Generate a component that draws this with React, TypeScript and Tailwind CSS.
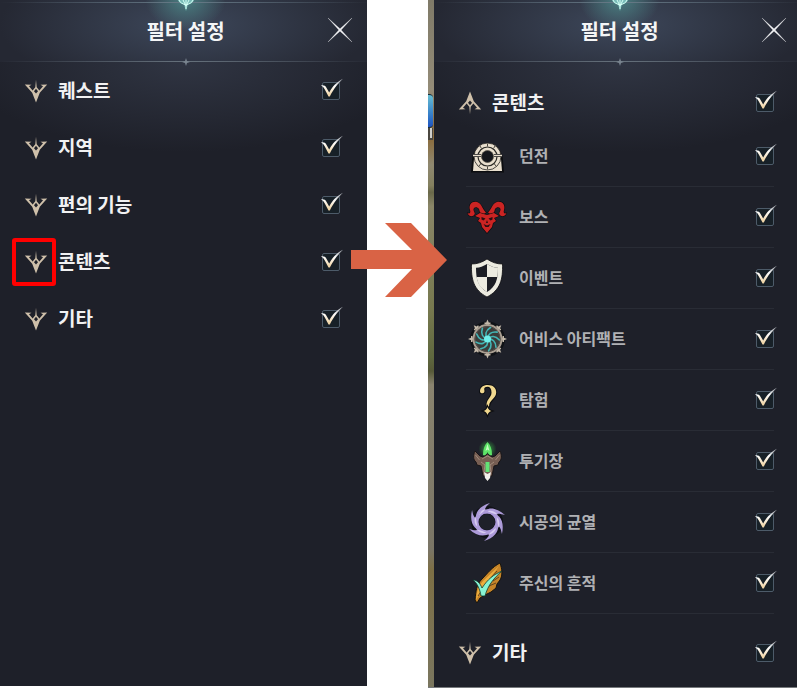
import { useState } from "react";
import type { ReactNode } from "react";

const CATEGORIES = ["퀘스트", "지역", "편의 기능", "콘텐츠", "기타"];

const DungeonIcon = () => (
  <svg viewBox="0 0 42 42" className="size-[42px]" aria-hidden="true">
    <path d="M5 37.5l1-12a15.300 15.300 0 0 1 31 0l1 12z" fill="#0c0d10" />
    <path d="M7 36l1-12h27l1 12z" fill="#e9dfce" />
    <circle cx="21.500" cy="21.500" r="13.500" fill="#e9dfce" stroke="#23221f" strokeWidth="0.800" />
    <circle cx="21.500" cy="21.500" r="9.500" fill="none" stroke="#2a2925" strokeWidth="1.200" />
    <circle cx="21.500" cy="21.500" r="6" fill="#14161c" stroke="#5b554b" strokeWidth="0.800" />
    <path d="M21.500 8.500v3M21.500 31.500v3M14 11l1.500 2.500M29 11l-1.500 2.500M13 31l2-2.500M30 31l-2-2.500" stroke="#4a463e" />
    <path d="M7 20.500h8M28 20.500h8" stroke="#16171b" strokeWidth="3" />
    <path d="M7 20.500h8M28 20.500h8" stroke="#e9dfce" strokeWidth="1.400" />
  </svg>
);

const BossIcon = () => (
  <svg viewBox="0 0 42 42" className="size-[42px]" aria-hidden="true">
    <g fill="#cb2423" stroke="#0c0d10" strokeWidth="1.200" strokeLinejoin="round" paintOrder="stroke">
      <path d="M15 20l-2-7c-2-3-6-2-5.500 1 .3 2 2 3 1 4.500C7 21 3 21 1.500 17c2 1 3.500 0 2.500-3C2 8 7 4.500 11 6c5 1.500 5 7 9 10.500z" />
      <path d="M27 20l2-7c2-3 6-2 5.500 1-.3 2-2 3-1 4.500 1.500 2.500 5.500 2.500 7-1.500-2 1-3.500 0-2.500-3 2-6-3-9.500-7-8-5 1.500-5 7-9 10.500z" />
      <path d="M14 17l7 2 7-2 5 3-5 2 2 3-3 2-1 4-5 6-5-6-1-4-3-2 2-3-5-2z" />
    </g>
    <path d="M15.500 21l4 1.500-2 2-2-1zM26.500 21l-4 1.500 2 2 2-1zM21 24l-1 3h2zM17.500 28l3.500 1.500 3.500-1.500-2 3h-3z" fill="#2a0d11" />
  </svg>
);

const EventIcon = () => (
  <svg viewBox="0 0 42 42" className="size-[42px]" aria-hidden="true">
    <path d="M21 2c5 3.500 10 5 15.500 5 .5 15-2 26-15.500 33C7.500 33 5 22 5.500 7 11 7 16 5.500 21 2z" fill="#ecebe0" stroke="#0c0d10" strokeWidth="0.800" />
    <path d="M21 7c4 2.500 7 3.500 11 3.700 0 11.500-2 18.800-11 24.300C12 29.500 10 22.200 10 10.700 14 10.500 17 9.500 21 7z" fill="#1b1d24" />
    <path d="M21 7c4 2.500 7 3.500 11 3.700 0 3.300-.2 6.300-.6 9.300H21zM21 20H10.600c.9 6.500 4 11.500 10.400 15z" fill="#ecebe0" />
  </svg>
);

const ArtifactIcon = () => (
  <svg viewBox="0 0 42 42" className="size-[42px]" aria-hidden="true">
    <circle cx="21.500" cy="21" r="17.500" fill="#101216" />
    {[0, 45, 90, 135, 180, 225, 270, 315].map((deg) => (
      <path
        key={deg}
        d="M21.500 1.500l1.300 3h1.700v1.500h-1.500V9h-3V6h-1.500V4.500h1.700z"
        fill="#c4b9aa"
        transform={`rotate(${deg} 21.500 21)`}
      />
    ))}
    <circle cx="21.500" cy="21" r="14" fill="#3b3c3a" stroke="#aa9f92" strokeWidth="2" />
    <circle cx="21.500" cy="21" r="12.500" fill="none" stroke="#584f49" />
    {[0, 40, 80, 120, 160, 200, 240, 280, 320].map((deg) => (
      <path
        key={deg}
        d="M21.500 21c-3-4-2-8.500 3-11.500"
        fill="none"
        stroke="#43b5b5"
        strokeWidth="1.600"
        strokeLinecap="round"
        transform={`rotate(${deg} 21.500 21)`}
      />
    ))}
    <circle cx="21.500" cy="21" r="3.500" fill="#70efea" />
  </svg>
);

const ExploreIcon = () => (
  <svg viewBox="0 0 42 42" className="size-[42px]" aria-hidden="true">
    <g fill="#f1d88f" stroke="#0c0d10" strokeWidth="2" paintOrder="stroke">
      <path d="M14 12.500C14 8.500 17 6 21.800 6c5 0 8.400 2.800 8.400 7.300 0 6.700-7 7.200-7.200 14.200h-2.200c-1.400-7 4.700-8.500 4.700-14 0-3.800-1.500-5.700-4-5.700-2.300 0-3.700 1.200-3.200 3 .6 2-.2 3.500-1.800 3.500-1.500 0-2.500-.7-2.500-1.800z" />
      <path d="M21.500 28c.8 2.300 1.800 3.300 4 4-2.200.7-3.200 1.700-4 4-.8-2.300-1.800-3.300-4-4 2.200-.7 3.200-1.700 4-4z" />
    </g>
  </svg>
);

const ArenaIcon = () => (
  <svg viewBox="0 0 42 42" className="size-[42px]" aria-hidden="true">
    <defs>
      <radialGradient id="arena-glow">
        <stop stopColor="#42ed51" stopOpacity="0.600" />
        <stop offset="1" stopColor="#42ed51" stopOpacity="0" />
      </radialGradient>
    </defs>
    <circle cx="21.500" cy="9" r="9" fill="url(#arena-glow)" />
    <path d="M21.500 2c3 3 4.500 7 4.500 13l-2.500 1-2-4-2 4-2.500-1c0-6 1.500-10 4.500-13z" fill="#5ee568" />
    <path d="M21.500 4l2 7-2-1.500-2 1.500z" fill="#c8ffc2" />
    <path d="M17 17l4.500-3 4.500 3 3-1 5-5c2 4 2 9-1 11l-1 3-4 1-2 10h-9l-2-10-4-1-1-3c-3-2-3-7-1-11l5 5z" fill="#765e53" stroke="#181517" />
    <path d="M16 19l5.500-3 5.500 3M15 22l4 3-1 7M28 22l-4 3 1 7M9.500 15l4 5M33.500 15l-4 5" fill="none" stroke="#a18b7b" />
    <path d="M19.500 22h4v10h-4z" fill="#62e276" />
    <path d="M18 32l3.500 2 3.500-2-1 6-2.500 3-2.500-3z" fill="#f3f0eb" />
  </svg>
);

const RiftIcon = () => (
  <svg viewBox="0 0 42 42" className="size-[42px]" aria-hidden="true">
    <circle cx="21" cy="21" r="12" fill="none" stroke="#101118" strokeWidth="8" />
    <circle cx="21" cy="21" r="10.500" fill="none" stroke="#a995d9" strokeWidth="4" />
    {[0, 60, 120, 180, 240, 300].map((deg) => (
      <g key={deg} transform={`rotate(${deg} 21 21)`}>
        <path d="M10 18C9 11 14 5 24 2c-4 3.500-5.500 5.500-5 8 3-1 6-.5 9 1-7-1-13 1-15 7z" fill="#ad9bd9" />
        <path d="M12 15c1-4 4-6 8-7-3 3-4 4-8 7z" fill="#d7cbf1" />
      </g>
    ))}
  </svg>
);

const TraceIcon = () => (
  <svg viewBox="0 0 42 42" className="size-[42px]" aria-hidden="true">
    <path d="M34 1c2 6 3 12 0 17l-3 4-1 4-5 4-6 3-5 3-3 5-2-3c1-9 1-15 7-21 5-5 10-12 18-16z" fill="#c68428" stroke="#15130f" />
    <path d="M33 4c-7 10-15 20-23 34 1-9 2-14 8-20z" fill="#edad3d" />
    <path d="M31 9C23 18 17 26 12 34M33 15l-6 4M30 21l-7 3" fill="none" stroke="#62441f" />
    <path d="M7 18c4 0 7 3 9 8 6-9 11-13 20-17-8 7-14 14-17 25h-4c-1-7-4-13-8-16z" fill="#87f3d3" stroke="#12392f" strokeWidth="0.800" />
  </svg>
);

const CONTENTS: { name: string; icon: ReactNode }[] = [
  { name: "던전", icon: <DungeonIcon /> },
  { name: "보스", icon: <BossIcon /> },
  { name: "이벤트", icon: <EventIcon /> },
  { name: "어비스 아티팩트", icon: <ArtifactIcon /> },
  { name: "탐험", icon: <ExploreIcon /> },
  { name: "투기장", icon: <ArenaIcon /> },
  { name: "시공의 균열", icon: <RiftIcon /> },
  { name: "주신의 흔적", icon: <TraceIcon /> },
];

const FilterCheckbox = ({ id }: { id: string }) => {
  const [checked, setChecked] = useState(true);

  return (
    <span className="relative size-[18px] shrink-0">
      <input
        id={id}
        type="checkbox"
        checked={checked}
        onChange={(e) => setChecked(e.target.checked)}
        className="peer block size-[18px] cursor-pointer appearance-none rounded-[2px] border border-[#4d5b69] bg-[#172027]"
      />
      <svg
        viewBox="0 0 24 24"
        className="pointer-events-none absolute -top-1 -left-0.5 hidden size-6 peer-checked:block"
        aria-hidden="true"
      >
        <defs>
          <linearGradient id={`${id}-tick`} x1="0" y1="0" x2="0" y2="1">
            <stop offset="0.100" stopColor="#a9adb3" />
            <stop offset="0.400" stopColor="#ffffff" />
            <stop offset="0.900" stopColor="#f0d6a8" />
          </linearGradient>
        </defs>
        <path
          d="M1 7.500c2.300-.6 4.500.2 5.300 2l2.900 5C12.500 8.500 16.500 4 23 .8 18 5.500 14 10.500 9.800 18.500H8.500L4.800 11.500C3.800 9.500 2.800 8.300 1 7.500z"
          fill={`url(#${id}-tick)`}
        />
      </svg>
    </span>
  );
};

const ExpandIcon = ({ expanded }: { expanded: boolean }) => (
  <svg viewBox="0 0 24 24" className={expanded ? "size-6 rotate-180" : "size-6"} aria-hidden="true">
    <g fill="#cfc0aa">
      <path d="M.8 5.500l6.700.3L5 7.300l7 8.200 7-8.200-2.500-1.500 6.700-.3-7.400 8.300L12 23.500l-3.800-9.700z" />
      <path d="M12 .8l.7 7.400 3.300 4-1.500 2L12 16.500l-2.500-2.300-1.500-2 3.300-4z" />
    </g>
    <path d="M12 9.800l2 2.400-2 2.400-2-2.400z" fill="#1e2029" />
  </svg>
);

interface CategoryRowProps {
  id: string;
  name: string;
  expanded?: boolean;
  highlighted?: boolean;
  className: string;
}

const CategoryRow = ({ id, name, expanded = false, highlighted = false, className }: CategoryRowProps) => (
  <div className={`flex items-center pr-[31px] pl-6 ${className}`}>
    <button type="button" aria-label={name} aria-expanded={expanded} className="relative size-6 shrink-0 cursor-pointer">
      <ExpandIcon expanded={expanded} />
      {highlighted && <span className="absolute -inset-y-3 -right-2 -left-3 rounded-[3px] border-4 border-[#ff0000]" />}
    </button>
    <label htmlFor={id} className="ml-2.5 flex-1 pb-0.5 text-[19px] leading-7 font-bold text-[#f1f1f2]">
      {name}
    </label>
    <FilterCheckbox id={id} />
  </div>
);

const PanelHeader = () => (
  <header className="relative flex h-[62px] items-center justify-center bg-[radial-gradient(ellipse_50%_110%_at_50%_40%,#3d475a,#252833)]">
    <div className="absolute inset-x-0 top-0 h-9 bg-[radial-gradient(ellipse_40px_30px_at_50%_0,#4b8083,#4b808300)]" />
    <div className="absolute inset-x-0 top-[2px] h-px bg-linear-to-r from-transparent via-[#667885] to-transparent" />
    <div className="absolute inset-x-0 bottom-0 h-px bg-linear-to-r from-transparent via-[#66717c] to-transparent" />
    <svg viewBox="0 0 24 12" className="absolute top-0 left-1/2 h-3 w-6 -translate-x-1/2" aria-hidden="true">
      <path d="M4 0c1 3 4 4 6 4.500L12 11l2-6.500c2-.5 5-1.500 6-4.500z" fill="#78bcb8" />
      <path d="M5 0c1 3 4 4 7 5 3-1 6-2 7-5M9 0l3 6 3-6M12 0v9" fill="none" stroke="#d5fff5" />
    </svg>
    <svg viewBox="0 0 8 8" className="absolute -bottom-1 left-1/2 size-2 -translate-x-1/2" aria-hidden="true">
      <path d="M4 0l1 3 3 1-3 1-1 3-1-3-3-1 3-1z" fill="#79848f" />
    </svg>
    <h2 className="relative text-[20px] leading-7 font-bold text-[#f4f5f6]">필터 설정</h2>
    <button type="button" aria-label="닫기" className="absolute top-[17px] right-[18px] size-[26px] cursor-pointer">
      <svg viewBox="0 0 26 26" className="size-[26px]" aria-hidden="true">
        <path
          d="M1 1l12 10.800L25 1 14.200 13 25 25 13 14.200 1 25l10.800-12z"
          fill="#f0f1f3"
          stroke="#dfe1e5"
          strokeWidth="0.300"
        />
      </svg>
    </button>
  </header>
);

const panelBody = "bg-[#1e2029] bg-[radial-gradient(ellipse_60%_90px_at_50%_0,#303543,#1e2029)]";

export default function App() {
  return (
    <main className="grid min-h-screen grid-cols-[367fr_369fr] items-start gap-x-[61px] bg-white pr-[3px] font-['Noto_Sans_CJK_KR',sans-serif]">
      <section className="flex min-h-[calc(100vh-4px)] overflow-hidden bg-[#1e2029]">
        <div className="-mr-1 flex min-w-0 flex-1 flex-col">
          <PanelHeader />
          <div className={`flex-1 ${panelBody}`}>
            {CATEGORIES.map((name, i) => (
              <CategoryRow key={name} id={`category-${i}`} name={name} highlighted={name === "콘텐츠"} className="h-[57px]" />
            ))}
          </div>
        </div>
      </section>

      <section className="relative flex min-h-[calc(100vh-2px)] border-b border-[#777a7d] bg-[linear-gradient(#7f7a68,#948c78_13%,#8a6a3a_20%,#8f8870_24%,#84805f_27%,#6a694a_28%,#8a8668_30%,#77794f_45%,#5f683f_52%,#575a38_54%,#8a846f_56%,#7a7566_80%,#7d6f45_83%,#7a765f)] pl-1.5">
        {/* 지도 위 파란 표식 */}
        <div className="absolute top-[94px] left-0 h-[46px] w-[5px] overflow-hidden" aria-hidden="true">
          <div className="h-[34px] rounded-r-sm border-y border-[#142c3c] bg-linear-to-b from-[#67bdd1] to-[#2053c0]" />
          <div className="h-3 bg-[#4b4740]">
            <div className="ml-0.5 h-[10px] w-0.5 bg-[#d0d0cc]" />
          </div>
        </div>
        <div className="min-w-0 flex-1 overflow-hidden">
          <div className="-mr-2 flex h-full flex-col">
            <PanelHeader />
            <div className={`flex-1 ${panelBody}`}>
              <CategoryRow id="contents" name="콘텐츠" expanded className="mt-[18px] h-[46px]" />
              <ul className="mr-[31px] ml-8">
                {CONTENTS.map(({ name, icon }, i) => (
                  <li key={name} className="flex h-[61px] items-center border-b border-[#292c35]">
                    {icon}
                    <label
                      htmlFor={`content-${i}`}
                      className="ml-[11px] flex-1 pb-0.5 text-[16px] leading-6 font-bold text-[#b0b1b4]"
                    >
                      {name}
                    </label>
                    <FilterCheckbox id={`content-${i}`} />
                  </li>
                ))}
              </ul>
              <CategoryRow id="etc" name="기타" className="mt-4 h-[46px]" />
            </div>
          </div>
        </div>

        <svg viewBox="0 0 96 74" className="absolute top-[223px] -left-[77px] h-[74px] w-24" aria-hidden="true">
          <path d="M0 27h61L34 0h26l36 37-36 37H34l27-28H0z" fill="#d96345" />
        </svg>
      </section>
    </main>
  );
}
